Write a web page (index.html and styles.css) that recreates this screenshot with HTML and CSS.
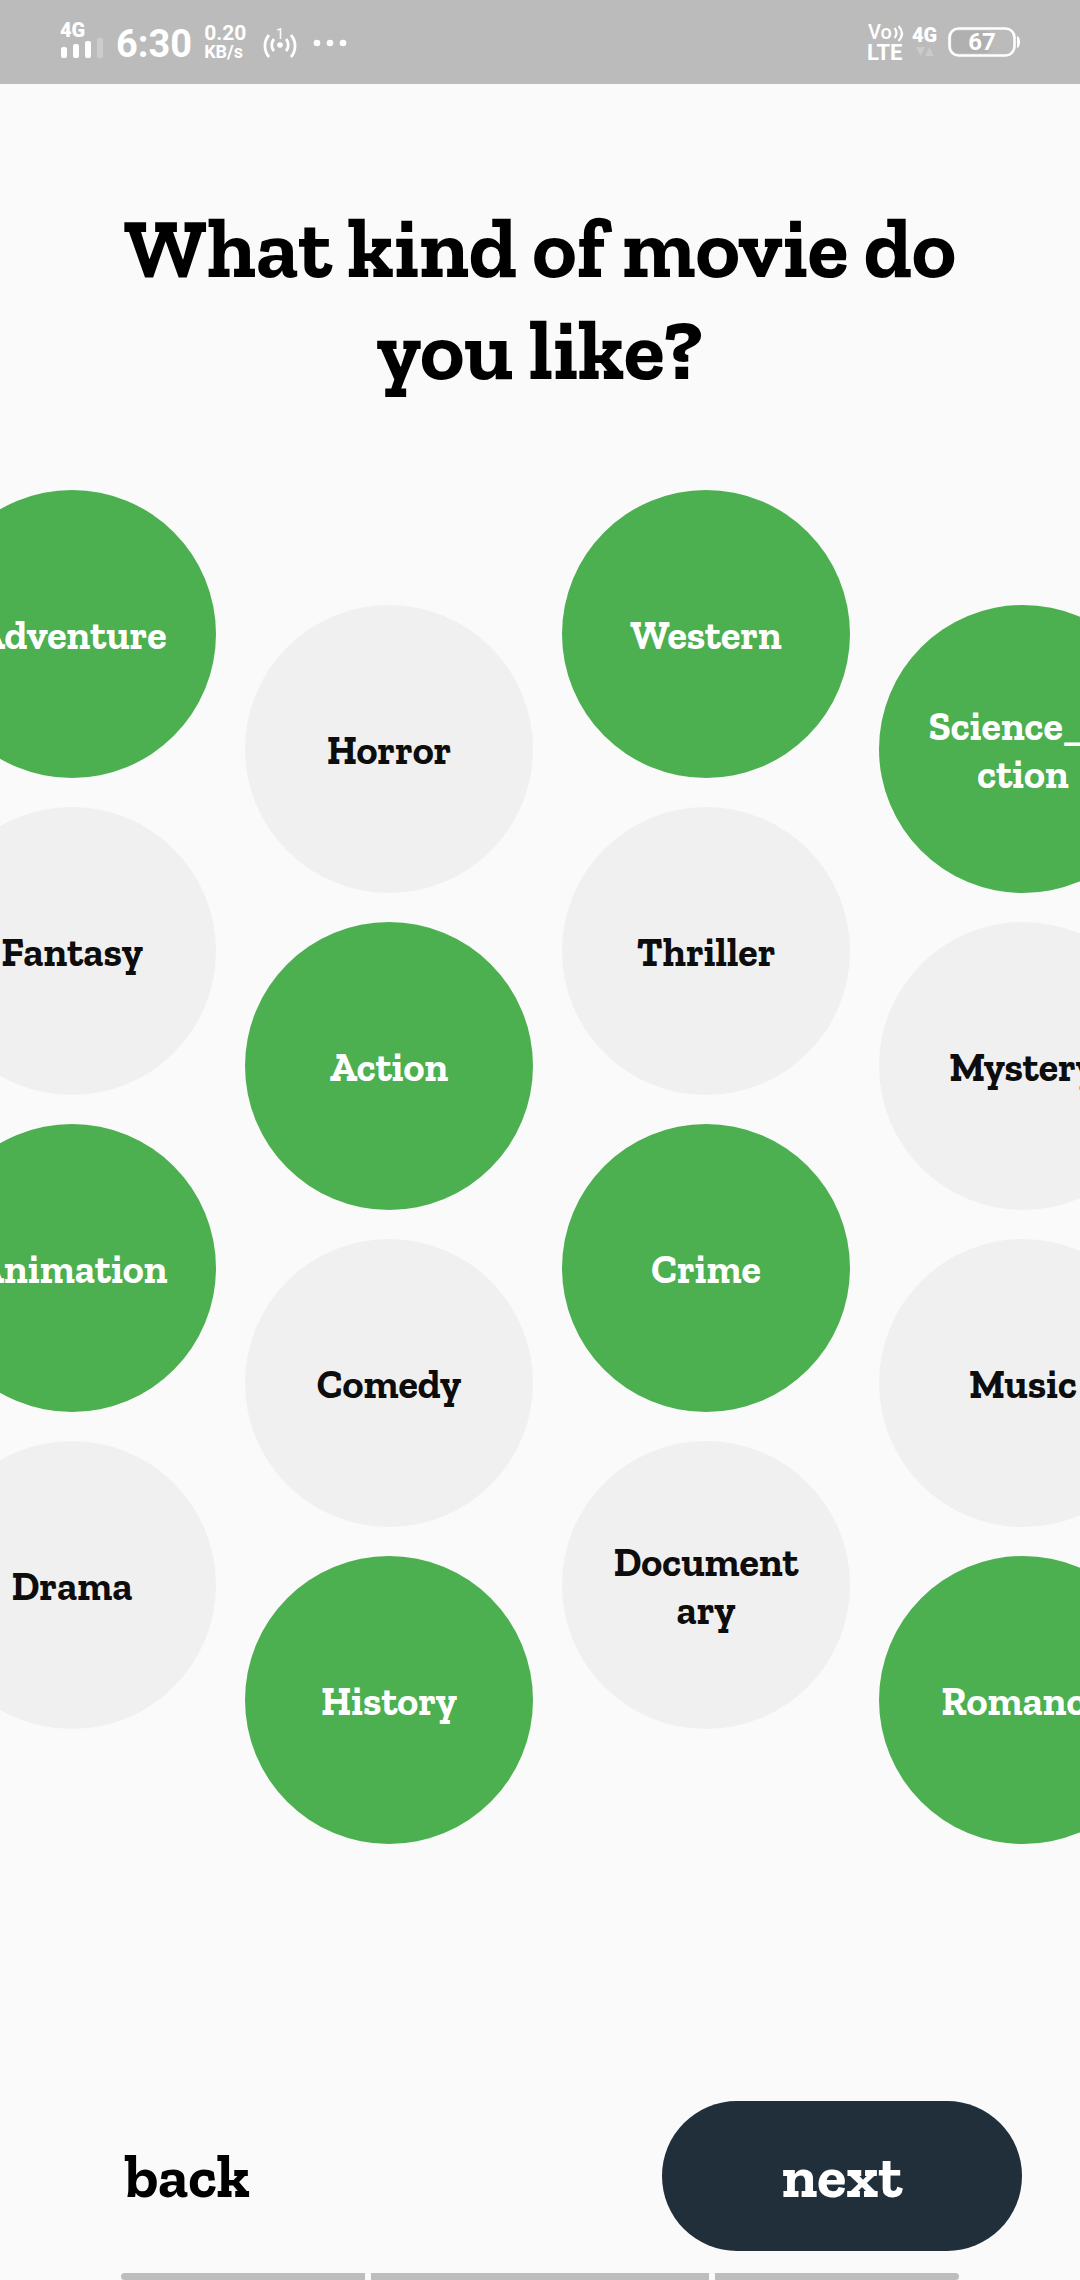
FILE: index.html
```html
<!DOCTYPE html>
<html lang="en">
<head>
  <meta charset="utf-8">
  <meta name="viewport" content="width=device-width, initial-scale=1">
  <title>What kind of movie do you like?</title>
  <link rel="stylesheet" href="styles.css">
</head>
<body>
  <div class="screen">
    <header class="status">
      <div class="status-group">
        <svg class="icon" width="44" height="40" viewBox="0 0 44 40" aria-label="4G signal">
          <text class="tag" x="0" y="17">4G</text>
          <g fill="#fff">
            <rect x="1" y="27" width="6" height="11" rx="2"/>
            <rect x="13" y="24" width="6" height="14" rx="2"/>
            <rect x="25" y="21" width="6" height="17" rx="2"/>
            <rect x="37" y="18" width="6" height="20" rx="2" opacity=".25"/>
          </g>
        </svg>
        <span class="clock">6:30</span>
        <span class="speed"><span class="rate">0.20</span><span class="unit">KB/s</span></span>
        <svg class="icon hotspot" width="34" height="40" viewBox="0 0 34 40" aria-label="Hotspot">
          <g fill="none" stroke="#fff" stroke-width="2.8">
            <path d="M11 19a9 9 0 0 0 0 12M23 19a9 9 0 0 1 0 12M6 15a17 17 0 0 0 0 22M28 15a17 17 0 0 1 0 22"/>
          </g>
          <circle cx="17" cy="25" r="2.800" fill="#fff"/>
          <text class="count" x="17" y="19">1</text>
        </svg>
        <svg class="icon" width="34" height="40" viewBox="0 0 34 40" aria-label="More">
          <g fill="#fff"><circle cx="4" cy="23" r="3.300"/><circle cx="17" cy="23" r="3.300"/><circle cx="30" cy="23" r="3.300"/></g>
        </svg>
      </div>
      <div class="status-group status-right">
        <svg class="icon" width="36" height="40" viewBox="0 0 36 40" aria-label="VoLTE">
          <g fill="none" stroke="#fff" stroke-width="2.200">
            <path d="M26.500 8q4 5 0 10M30.500 6q7 7.500 0 15"/>
          </g>
          <text class="vo" x="0" y="19">Vo</text>
          <text class="lte" x="-1" y="40">LTE</text>
        </svg>
        <svg class="icon" width="28" height="40" viewBox="0 0 28 40" aria-label="4G data">
          <text class="tag" x="0" y="22">4G</text>
          <path d="M4 27h9l-4.500 9zM13 36h9l-4.500 -9z" fill="#cacaca"/>
        </svg>
        <svg class="icon" width="72" height="40" viewBox="0 0 72 40" aria-label="Battery 67%">
          <rect x="4" y="11" width="39" height="22" rx="5" fill="#b0b0b0"/>
          <rect x="1.500" y="8.500" width="65" height="27" rx="9" fill="none" stroke="#fff" stroke-width="2.600"/>
          <path d="M69 16q3 1 3 6t-3 6z" fill="#fff"/>
          <text class="charge" x="34" y="30">67</text>
        </svg>
      </div>
    </header>

    <main class="content">
      <h1 class="title">What kind of movie do you like?</h1>
      <div class="genres">
        <div class="column">
          <button class="genre" aria-pressed="true">Adventure</button>
          <button class="genre" aria-pressed="false">Fantasy</button>
          <button class="genre" aria-pressed="true">Animation</button>
          <button class="genre" aria-pressed="false">Drama</button>
        </div>
        <div class="column lowered">
          <button class="genre" aria-pressed="false">Horror</button>
          <button class="genre" aria-pressed="true">Action</button>
          <button class="genre" aria-pressed="false">Comedy</button>
          <button class="genre" aria-pressed="true">History</button>
        </div>
        <div class="column">
          <button class="genre" aria-pressed="true">Western</button>
          <button class="genre" aria-pressed="false">Thriller</button>
          <button class="genre" aria-pressed="true">Crime</button>
          <button class="genre" aria-pressed="false">Document<br>ary</button>
        </div>
        <div class="column lowered">
          <button class="genre" aria-pressed="true">Science_Fi<br>ction</button>
          <button class="genre" aria-pressed="false">Mystery</button>
          <button class="genre" aria-pressed="false">Music</button>
          <button class="genre" aria-pressed="true">Romance</button>
        </div>
      </div>
    </main>

    <footer class="actions">
      <button class="back">back</button>
      <button class="next">next</button>
    </footer>
    <div class="gesture">
      <span class="bar bar-start"></span>
      <span class="bar bar-middle"></span>
      <span class="bar bar-end"></span>
    </div>
  </div>
</body>
</html>
```
FILE: styles.css
```css
* {
  box-sizing: border-box;
}

body {
  margin: 0;
  background: #fafafa;
  color: #000;
  font-family: "Zilla Slab", "DejaVu Serif Condensed", "DejaVu Serif", serif;
  font-weight: 700;
}

button {
  padding: 0;
  border: 0;
  background: none;
  color: inherit;
  font: inherit;
  cursor: pointer;
}

.screen {
  display: flex;
  flex-direction: column;
  min-height: 100vh;
  overflow: hidden;
}

/* Status bar */
.status {
  display: flex;
  justify-content: space-between;
  height: 84px;
  padding: 20px 60px 0;
  background: #bbb;
  color: #fff;
  font-family: Roboto, sans-serif;
}

.status-group {
  display: flex;
  align-items: flex-start;
  gap: 12px;
}

.status-right {
  gap: 8px;
}

.icon {
  flex: none;
  overflow: visible;
}

.icon text {
  fill: #fff;
}

.tag {
  font-size: 20px;
  font-weight: 900;
}

.clock {
  font-size: 38px;
  line-height: 48px;
}

.speed {
  display: flex;
  flex-direction: column;
  padding-top: 3px;
}

.rate {
  font-size: 21px;
  line-height: 20px;
}

.unit {
  font-size: 18px;
  line-height: 18px;
}

.hotspot {
  margin: 0 4px 0 5px;
}

.count {
  font-size: 15px;
  font-weight: 400;
  text-anchor: middle;
}

.vo {
  font-size: 20px;
  font-weight: 500;
}

.lte {
  font-size: 22px;
}

.charge {
  font-size: 24px;
  text-anchor: middle;
}

/* Question */
.title {
  margin: 0;
  padding: 114px 108px 0;
  font-size: 84px;
  line-height: 102px;
  text-align: center;
}

/* Genre bubbles, wider than the screen on both sides */
.genres {
  display: flex;
  gap: 29px;
  margin: 88px 0 0 -72px;
}

.column {
  display: flex;
  flex: none;
  flex-direction: column;
  gap: 29px;
}

.lowered {
  padding-top: 115px;
}

.genre {
  width: 288px;
  height: 288px;
  padding-top: 2px;
  border-radius: 50%;
  background: #f0f0f0;
  color: #0d0d0d;
  font-size: 40px;
  line-height: 48px;
  text-align: center;
}

.genre[aria-pressed="true"] {
  background: #4caf50;
  color: #fff;
}

/* Bottom actions */
.actions {
  display: flex;
  align-items: center;
  justify-content: space-between;
  margin-top: auto;
  padding: 40px 58px 22px 125px;
  font-size: 60px;
  line-height: 72px;
}

.next {
  width: 360px;
  height: 150px;
  border-radius: 75px;
  background: #212f3b;
  color: #fff;
}

.gesture {
  display: flex;
  gap: 6px;
  padding: 0 121px;
}

.bar {
  flex: 244;
  height: 7px;
  background: #bdbdbd;
}

.bar-start {
  border-radius: 4px 0 0 4px;
}

.bar-middle {
  flex: 338;
}

.bar-end {
  border-radius: 0 4px 4px 0;
}
```
